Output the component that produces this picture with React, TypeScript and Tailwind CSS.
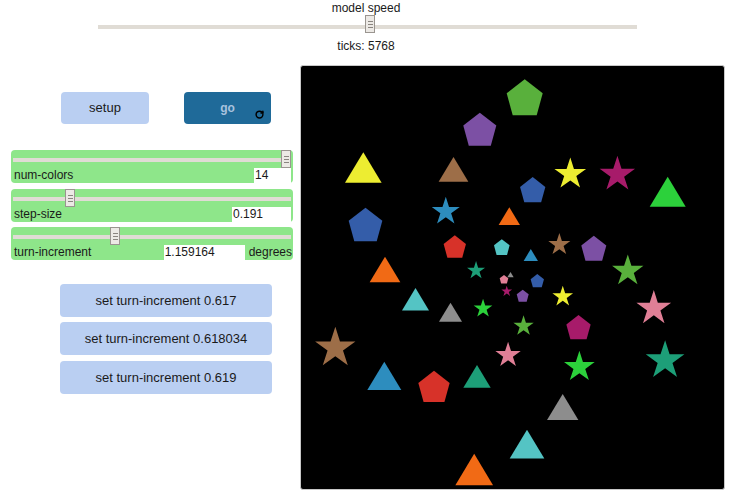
import { RotateCw } from "lucide-react";

type Shape = { t: "tri" | "pent" | "star"; x: number; y: number; s: number; c: string };

const COLORS = {
  gray: "#8d8d8d",
  red: "#d73229",
  orange: "#f16a15",
  brown: "#9d6e48",
  yellow: "#eded31",
  green: "#59b03c",
  lime: "#2cd13b",
  turquoise: "#1d9f78",
  cyan: "#54c4c4",
  sky: "#2d8dbe",
  blue: "#345da9",
  violet: "#7c50a4",
  magenta: "#a71b6a",
  pink: "#e07f96",
};

const POINTS = {
  tri: "150,30 15,255 285,255",
  pent: "150,15 15,120 60,285 240,285 285,120",
  star: "151,1 185,108 298,108 207,175 242,282 151,216 59,282 94,175 3,108 116,108",
};

const shapes: Shape[] = [
  { t: "pent", x: 223.7, y: 31.3, s: 40, c: COLORS.green },
  { t: "pent", x: 178.8, y: 63.2, s: 36.7, c: COLORS.violet },
  { t: "tri", x: 62.3, y: 102.6, s: 40.7, c: COLORS.yellow },
  { t: "tri", x: 152.5, y: 104.2, s: 33, c: COLORS.brown },
  { t: "star", x: 269.2, y: 107.4, s: 32.2, c: COLORS.yellow },
  { t: "star", x: 316.3, y: 107.7, s: 36, c: COLORS.magenta },
  { t: "tri", x: 366.7, y: 126.7, s: 40, c: COLORS.lime },
  { t: "pent", x: 231.7, y: 123.7, s: 28.1, c: COLORS.blue },
  { t: "star", x: 144.7, y: 144.9, s: 28.5, c: COLORS.sky },
  { t: "pent", x: 64.5, y: 158.5, s: 37.4, c: COLORS.blue },
  { t: "tri", x: 208.3, y: 150.8, s: 23.7, c: COLORS.orange },
  { t: "pent", x: 153.8, y: 180.5, s: 24.8, c: COLORS.red },
  { t: "pent", x: 200.8, y: 181.1, s: 17.4, c: COLORS.cyan },
  { t: "tri", x: 229.8, y: 189.4, s: 15.9, c: COLORS.sky },
  { t: "star", x: 258.3, y: 178.2, s: 22.4, c: COLORS.brown },
  { t: "pent", x: 292.8, y: 182.2, s: 27.8, c: COLORS.violet },
  { t: "star", x: 326.7, y: 204.3, s: 31.9, c: COLORS.green },
  { t: "tri", x: 84, y: 204.3, s: 34.1, c: COLORS.orange },
  { t: "star", x: 175, y: 204.2, s: 18.3, c: COLORS.turquoise },
  { t: "pent", x: 203, y: 213.3, s: 9.6, c: COLORS.pink },
  { t: "tri", x: 209.5, y: 208.8, s: 7, c: COLORS.gray },
  { t: "pent", x: 236.3, y: 214.7, s: 14.8, c: COLORS.blue },
  { t: "star", x: 205.7, y: 225.1, s: 10.9, c: COLORS.magenta },
  { t: "pent", x: 221.7, y: 229.7, s: 13.3, c: COLORS.violet },
  { t: "star", x: 261.7, y: 230.2, s: 21, c: COLORS.yellow },
  { t: "star", x: 352.7, y: 241.6, s: 35.3, c: COLORS.pink },
  { t: "tri", x: 114.5, y: 234, s: 30, c: COLORS.cyan },
  { t: "tri", x: 149.5, y: 246.9, s: 25.6, c: COLORS.gray },
  { t: "star", x: 182, y: 242.2, s: 19, c: COLORS.lime },
  { t: "star", x: 222.5, y: 259.6, s: 20.7, c: COLORS.green },
  { t: "pent", x: 277.5, y: 261.2, s: 27, c: COLORS.magenta },
  { t: "star", x: 34.2, y: 281.2, s: 41, c: COLORS.brown },
  { t: "star", x: 207, y: 288.6, s: 25.8, c: COLORS.pink },
  { t: "star", x: 278.3, y: 300.3, s: 31.2, c: COLORS.lime },
  { t: "star", x: 364, y: 293.7, s: 39.3, c: COLORS.turquoise },
  { t: "tri", x: 83.3, y: 310.8, s: 37.8, c: COLORS.sky },
  { t: "pent", x: 133, y: 320.4, s: 34.8, c: COLORS.red },
  { t: "tri", x: 176, y: 311.2, s: 30.4, c: COLORS.turquoise },
  { t: "tri", x: 261.7, y: 341.9, s: 34.8, c: COLORS.gray },
  { t: "tri", x: 226, y: 379.1, s: 38.5, c: COLORS.cyan },
  { t: "tri", x: 173.2, y: 404.5, s: 41.9, c: COLORS.orange },
];

const Thumb = ({ left }: { left: number }) => (
  <div
    className="absolute top-0 w-[10px] h-[18px] bg-[#ece9e5] border border-[#9a9590] flex flex-col items-center justify-center gap-[2px]"
    style={{ left }}
  >
    <div className="w-[5px] h-px bg-[#8a8580]" />
    <div className="w-[5px] h-px bg-[#8a8580]" />
    <div className="w-[5px] h-px bg-[#8a8580]" />
  </div>
);

const Slider = ({
  label,
  value,
  thumb,
  boxW,
  units,
}: {
  label: string;
  value: string;
  thumb: number;
  boxW: number;
  units?: string;
}) => (
  <div className="relative w-[282px] h-[33px] bg-[#8ee68a] rounded-[4px]">
    <div className="absolute left-[2px] right-[2px] top-[8px] h-[4px] bg-[#e0dcd5]" />
    <Thumb left={thumb} />
    <div className="absolute left-0 right-0 bottom-0 h-[15px] flex items-end">
      <span className="pl-[3px] text-[12px] leading-[15px] text-[#1a1a1a] flex-1">{label}</span>
      <span
        className="bg-white h-[15px] text-[12px] leading-[15px] text-[#1a1a1a] pl-[1px]"
        style={{ width: boxW }}
      >
        {value}
      </span>
      {units && (
        <span className="pl-[4px] pr-[1px] text-[12px] leading-[15px] text-[#1a1a1a]">{units}</span>
      )}
      {!units && <span className="w-[2px]" />}
    </div>
  </div>
);

const SetButton = ({ label }: { label: string }) => (
  <div className="w-[212px] h-[33px] bg-[#bacff2] rounded-[4px] flex items-center justify-center text-[13px] text-[#1a1a1a]">
    {label}
  </div>
);

export default function App() {
  return (
    <div
      className="w-[732px] h-[501px] bg-white overflow-hidden"
      style={{ fontFamily: '"Liberation Sans", Arial, sans-serif' }}
    >
      <div className="flex flex-col items-center">
        <div className="text-[12px] leading-[14px] mt-px text-[#1a1a1a]">model speed</div>
        <div className="relative w-[539px] h-[24px] ml-[3px]">
          <div className="absolute left-0 right-0 top-[10px] h-[4px] bg-[#e0dcd5]" />
          <Thumb left={267} />
        </div>
        <div className="text-[12px] leading-[14px] text-[#1a1a1a]">ticks: 5768</div>
      </div>

      <div className="flex mt-[12px]">
        <div className="w-[300px] flex flex-col pt-[27px]">
          <div className="flex pl-[61px] gap-[35px]">
            <div className="w-[88px] h-[32px] bg-[#bacff2] rounded-[4px] flex items-center justify-center text-[13px] text-[#1a1a1a]">
              setup
            </div>
            <div className="relative w-[87px] h-[32px] bg-[#1f6a99] rounded-[4px] flex items-center justify-center text-[12px] font-bold text-[#a7c2de]">
              go
              <RotateCw
                className="absolute right-[7px] bottom-[5px] text-black"
                size={9}
                strokeWidth={4}
              />
            </div>
          </div>

          <div className="flex flex-col pl-[11px] mt-[26px]">
            <Slider label="num-colors" value="14" thumb={270} boxW={37} />
            <div className="mt-[6px]">
              <Slider label="step-size" value="0.191" thumb={54} boxW={59} />
            </div>
            <div className="mt-[5px]">
              <Slider label="turn-increment" value="1.159164" thumb={99} boxW={81} units="degrees" />
            </div>
          </div>

          <div className="flex flex-col pl-[60px] mt-[24px]">
            <SetButton label="set turn-increment 0.617" />
            <div className="mt-[5px]">
              <SetButton label="set turn-increment 0.618034" />
            </div>
            <div className="mt-[6px]">
              <SetButton label="set turn-increment 0.619" />
            </div>
          </div>
        </div>

        <div className="w-[425px] h-[425px] border border-[#c8c8c8] rounded-[3px] bg-black overflow-hidden">
          <svg width={423} height={423} viewBox="0 0 423 423">
            {shapes.map((sh, i) => (
              <polygon
                key={i}
                points={POINTS[sh.t]}
                fill={sh.c}
                transform={`translate(${sh.x - sh.s / 2} ${sh.y - sh.s / 2}) scale(${sh.s / 300})`}
              />
            ))}
          </svg>
        </div>
      </div>
    </div>
  );
}
